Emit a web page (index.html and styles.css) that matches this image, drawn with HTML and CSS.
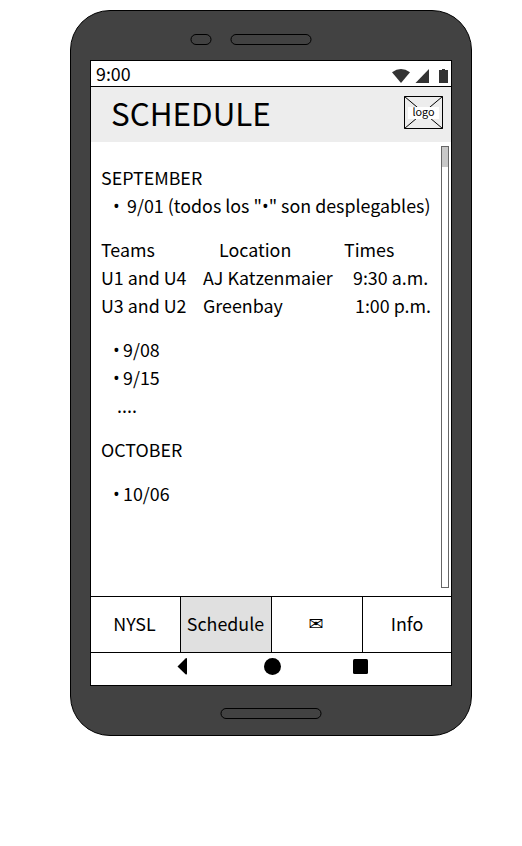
FILE: index.html
```html
<!DOCTYPE html>
<html lang="en">
<head>
<meta charset="utf-8">
<title>Schedule</title>
<link rel="stylesheet" href="styles.css">
</head>
<body>
<div class="phone">
  <div class="top-bezel">
    <svg width="124" height="12" viewBox="0 0 124 12" fill="none" stroke="#000">
      <rect x="1" y=".5" width="20" height="10" rx="5"/>
      <rect x="41" y=".5" width="80" height="10" rx="5"/>
    </svg>
  </div>
  <main class="screen">
    <div class="status">
      <span class="time">9:00</span>
      <svg class="status-icons" width="60" height="16" viewBox="0 0 60 16" fill="#333">
        <path d="M0 4.200Q9 -2.200 18 4.200L9 15Z"/>
        <path d="M23.500 15L37 1V15Z"/>
        <path d="M47 2h3V1h3v1h3v13h-9Z"/>
      </svg>
    </div>
    <header class="header">
      <h1>SCHEDULE</h1>
      <div class="logo">
        <svg width="39" height="33" viewBox="0 0 39 33" fill="none" stroke="#000"><path d="M.5 .5h38v32H.5ZM.5 .5l38 32M38.5 .5l-38 32"/></svg>
        <span>logo</span>
      </div>
    </header>
    <section class="content">
      <div class="list">
        <div class="group">
          <div>SEPTEMBER</div>
          <div class="item wide"><span class="dot">•</span><span>9/01 (todos los "<span class="dot">•</span>" son desplegables)</span></div>
        </div>
        <div class="group">
          <div class="row head"><span>Teams</span><span>Location</span><span>Times</span></div>
          <div class="row first"><span>U1 and U4</span><span>AJ Katzenmaier</span><span>9:30 a.m.</span></div>
          <div class="row second"><span>U3 and U2</span><span>Greenbay</span><span>1:00 p.m.</span></div>
        </div>
        <div class="group">
          <div class="item"><span class="dot">•</span><span>9/08</span></div>
          <div class="item"><span class="dot">•</span><span>9/15</span></div>
          <div class="more">....</div>
        </div>
        <div class="group"><div>OCTOBER</div></div>
        <div class="group"><div class="item"><span class="dot">•</span><span>10/06</span></div></div>
      </div>
      <div class="scrollbar"><div class="thumb"></div></div>
    </section>
    <nav class="tabs">
      <div>NYSL</div><div class="active">Schedule</div><div class="mail">✉</div><div>Info</div>
    </nav>
    <div class="softkeys">
      <svg width="360" height="32" viewBox="0 0 360 32">
        <path d="M86.500 13.500L94.500 5.500Q96 4.500 96 6V20.500Q96 22 94.500 21.200Z"/>
        <circle cx="181.500" cy="13.500" r="8.500"/>
        <rect x="262" y="6" width="15" height="15" rx="1.500"/>
      </svg>
    </div>
  </main>
  <div class="bottom-bezel">
    <svg width="102" height="12" viewBox="0 0 102 12" fill="none" stroke="#000">
      <rect x="1" y=".5" width="100" height="10" rx="5"/>
    </svg>
  </div>
</div>
</body>
</html>
```
FILE: styles.css
```css
* { box-sizing: border-box; }
body {
  margin: 0;
  padding: 10px 0 0 70px;
  background: #fff;
  color: #000;
  font: 17.85px/28px "Noto Sans CJK SC", sans-serif;
}
svg { display: block; }
.phone {
  width: 402px;
  height: 726px;
  border: 1px solid #000;
  border-radius: 40px;
  background: #424242;
  display: flex;
  flex-direction: column;
  align-items: center;
}
.top-bezel {
  width: 100%;
  height: 49px;
  padding: 23px 0 0 119px;
}
.bottom-bezel { padding-top: 22px; }
.screen {
  width: 362px;
  height: 626px;
  border: 1px solid #000;
  background: #fff;
  display: flex;
  flex-direction: column;
}
.status {
  height: 26px;
  border-bottom: 1px solid #000;
  padding: 0 0 0 5px;
  display: flex;
  justify-content: space-between;
  line-height: 24px;
}
.status-icons { margin: 7px -1px 0 0; }
.header {
  height: 55px;
  background: #ededed;
  padding: 0 8px 0 20px;
  display: flex;
  justify-content: space-between;
}
h1 { margin: 0; font-size: 31.4px; font-weight: 400; line-height: 52px; }
.logo { display: grid; margin-top: 9px; height: 33px; }
.logo > * { grid-area: 1 / 1; }
.logo span {
  place-self: center;
  width: 31px;
  height: 12px;
  background: #fff;
  font-size: 10.8px;
  line-height: 9px;
  text-align: center;
}
.content {
  height: 454px;
  display: flex;
  justify-content: space-between;
  padding: 4px 2px 8px 10px;
}
.list {
  width: 338px;
  padding-top: 17px;
  display: flex;
  flex-direction: column;
  gap: 16px;
  white-space: nowrap;
}
.item { display: grid; grid-template-columns: 10px auto; padding-left: 12px; }
.item.wide { grid-template-columns: 14px auto; }
.dot { font-family: "Open Sans", sans-serif; line-height: 1; }
.item > .dot { line-height: 31px; height: 28px; font-size: 18px; }
.row { display: grid; grid-template-columns: 102px 141px auto; }
.head span:nth-child(2) { padding-left: 16px; }
.first span:last-child { padding-left: 9px; }
.second span:last-child { padding-left: 11px; }
.more { padding-left: 16px; }
.scrollbar { width: 8px; height: 442px; border: 1px solid #666; }
.thumb { height: 20px; background: #c8c8c8; }
.tabs {
  height: 57px;
  border: solid #000;
  border-width: 1px 0;
  display: grid;
  grid-template-columns: 89px 91px 91px 89px;
  line-height: 52px;
  text-align: center;
}
.tabs div { padding-right: 2px; }
.tabs div:last-child { padding-right: 0; }
.tabs div + div { border-left: 1px solid #000; }
.tabs .mail { font-family: "DejaVu Sans", sans-serif; line-height: 54px; }
.tabs .active { background: #e0e0e0; padding-right: 1px; }
.softkeys { height: 32px; }
```
